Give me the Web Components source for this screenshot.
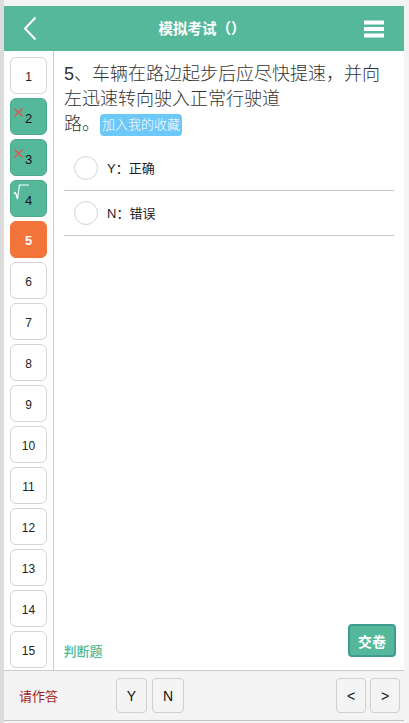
<!DOCTYPE html>
<html lang="zh">
<head>
<meta charset="utf-8">
<title>模拟考试</title>
<style>
  html, body { margin: 0; height: 100%; }
  body {
    width: 409px;
    height: 723px;
    overflow: hidden;
    background: #f4f4f4;
    font-family: "Liberation Sans", "Noto Sans CJK SC", sans-serif;
  }
</style>
</head>
<body>
<exam-app>
  <exam-header slot="header" title-text="模拟考试（）"></exam-header>
  <exam-sidebar slot="sidebar">
    <number-tile>1</number-tile>
    <number-tile state="wrong">2</number-tile>
    <number-tile state="wrong">3</number-tile>
    <number-tile state="right">4</number-tile>
    <number-tile state="current">5</number-tile>
    <number-tile>6</number-tile>
    <number-tile>7</number-tile>
    <number-tile>8</number-tile>
    <number-tile>9</number-tile>
    <number-tile>10</number-tile>
    <number-tile>11</number-tile>
    <number-tile>12</number-tile>
    <number-tile>13</number-tile>
    <number-tile>14</number-tile>
    <number-tile>15</number-tile>
  </exam-sidebar>
  <question-panel slot="main" kind="判断题">
    <span slot="question">5、车辆在路边起步后应尽快提速，并向<br>左迅速转向驶入正常行驶道<br>路。</span>
    <option-row>Y：正确</option-row>
    <option-row>N：错误</option-row>
  </question-panel>
  <exam-footer slot="footer"></exam-footer>
</exam-app>

<script>
class ExamApp extends HTMLElement {
  constructor() {
    super()
    this.attachShadow({ mode: "open" }).innerHTML = `
      <style>
        :host {
          display: block;
          width: 409px;
          height: 723px;
          box-sizing: border-box;
          padding: 6px 5px 2px 4px;
          background: linear-gradient(90deg, #dcdcdc 4px, #f4f4f4 4px);
        }
        #frame {
          display: grid;
          grid-template-columns: 50px 1fr;
          grid-template-rows: 45px 1fr 51px;
          height: 100%;
          background: #fff;
        }
        ::slotted([slot="header"]), ::slotted([slot="footer"]) { grid-column: 1 / 3; }
      </style>
      <div id="frame">
        <slot name="header"></slot>
        <slot name="sidebar"></slot>
        <slot name="main"></slot>
        <slot name="footer"></slot>
      </div>
    `
  }
}

class ExamHeader extends HTMLElement {
  constructor() {
    super()
    this.attachShadow({ mode: "open" }).innerHTML = `
      <style>
        :host {
          display: flex;
          align-items: center;
          justify-content: space-between;
          background: #56b89b;
          color: #fff;
          padding: 0 20px 0 19px;
        }
        #title {
          font-size: 14.5px;
          font-weight: bold;
          margin-left: 3px;
          position: relative;
          top: -1px;
        }
        svg { display: block; }
      </style>
      <svg width="14" height="26" viewBox="0 0 14 26" fill="none" stroke="#fff" stroke-width="2">
        <path d="M12.5 1.5 L2 12.5 L12.5 23.5"/>
      </svg>
      <span id="title"></span>
      <svg width="20" height="18" viewBox="0 0 20 18" fill="#fff">
        <rect x="0" y="0.5" width="20" height="4"/>
        <rect x="0" y="7" width="20" height="4"/>
        <rect x="0" y="13.500" width="20" height="4"/>
      </svg>
    `
    this.shadowRoot.getElementById("title").textContent = this.getAttribute("title-text")
  }
}

class ExamSidebar extends HTMLElement {
  constructor() {
    super()
    this.attachShadow({ mode: "open" }).innerHTML = `
      <style>
        :host {
          display: flex;
          flex-direction: column;
          gap: 4px;
          box-sizing: border-box;
          height: 619px;
          padding: 6px 6px 0 6px;
          border-right: 1px solid #ccc;
          background: #fff;
          overflow: hidden;
        }
      </style>
      <slot></slot>
    `
  }
}

class NumberTile extends HTMLElement {
  constructor() {
    super()
    this.attachShadow({ mode: "open" }).innerHTML = `
      <style>
        :host {
          display: flex;
          flex: none;
          align-items: center;
          justify-content: center;
          position: relative;
          width: 37px;
          height: 37px;
          box-sizing: border-box;
          border: 1px solid #d4d4d4;
          border-radius: 6px;
          background: #fff;
          color: #222;
          font-size: 12px;
          padding-top: 3px;
        }
        :host([state="wrong"]), :host([state="right"]) {
          background: #56b89b;
          border-color: #4fa88e;
          color: #111;
          font-size: 13px;
          padding-top: 3px;
          padding-left: 0;
        }
        :host([state="current"]) {
          background: #f2743a;
          border-color: #f2743a;
          color: #fff;
          font-weight: bold;
          font-size: 13px;
          padding-top: 1px;
        }
      </style>
      <svg id="wrong" style="position:absolute;left:2px;top:8px;display:none" width="11" height="11" viewBox="0 0 11 11" fill="none" stroke="#e0564f" stroke-width="1.500">
        <path d="M1.500 1.500 L9.500 9.500 M9.500 1.500 L1.500 9.500"/>
      </svg>
      <svg id="right" style="position:absolute;left:2px;top:3px;display:none" width="17" height="17" viewBox="0 0 17 17" fill="none" stroke="#fff" stroke-width="1.200">
        <path d="M0.500 9.500 L2.500 8.500 L4.500 15 L6.500 1 L16 1"/>
      </svg>
      <slot></slot>
    `
    const state = this.getAttribute("state")
    if (state === "wrong") this.shadowRoot.getElementById("wrong").style.display = "block"
    if (state === "right") this.shadowRoot.getElementById("right").style.display = "block"
  }
}

class QuestionPanel extends HTMLElement {
  constructor() {
    super()
    this.attachShadow({ mode: "open" }).innerHTML = `
      <style>
        :host {
          display: flex;
          flex-direction: column;
          position: relative;
          box-sizing: border-box;
          height: 619px;
          padding: 11px 10px 0 10px;
          background: #fff;
          color: #333;
        }
        #question {
          font-size: 18px;
          line-height: 25px;
          font-weight: 300;
          margin-bottom: 9px;
        }
        #fav {
          display: inline-block;
          background: #6cc8f7;
          color: #fff;
          font-size: 13px;
          line-height: 21px;
          height: 22px;
          padding: 0 2px;
          border-radius: 4px;
          vertical-align: 1px;
        }
        #kind {
          position: absolute;
          left: 9.500px;
          bottom: 10px;
          color: #4dbb9a;
          font-size: 13px;
          font-weight: 500;
        }
        #submit {
          position: absolute;
          right: 8px;
          bottom: 13px;
          width: 48px;
          height: 33px;
          box-sizing: border-box;
          border: 2px solid #3e9c90;
          border-radius: 4px;
          background: #56b89b;
          color: #fff;
          font: bold 14px "Liberation Sans", "Noto Sans CJK SC", sans-serif;
          padding: 0;
        }
      </style>
      <div id="question"><slot name="question"></slot><span id="fav">加入我的收藏</span></div>
      <slot></slot>
      <span id="kind"></span>
      <button id="submit">交卷</button>
    `
    this.shadowRoot.getElementById("kind").textContent = this.getAttribute("kind")
  }
}

class OptionRow extends HTMLElement {
  constructor() {
    super()
    this.attachShadow({ mode: "open" }).innerHTML = `
      <style>
        :host {
          display: flex;
          align-items: center;
          gap: 9px;
          height: 45px;
          box-sizing: border-box;
          padding-left: 10px;
          border-bottom: 1px solid #c8c8c8;
          font-size: 13px;
          color: #222;
        }
        #radio {
          width: 24px;
          height: 24px;
          box-sizing: border-box;
          border: 1px solid #d4d4d4;
          border-radius: 50%;
          background: #fff;
        }
        #label { padding-bottom: 2px; }
      </style>
      <span id="radio"></span><span id="label"><slot></slot></span>
    `
  }
}

class ExamFooter extends HTMLElement {
  constructor() {
    super()
    this.attachShadow({ mode: "open" }).innerHTML = `
      <style>
        :host {
          display: flex;
          align-items: center;
          box-sizing: border-box;
          padding: 0 4px 0 15px;
          background: #f4f4f4;
          border-top: 1px solid #ccc;
          border-bottom: 1px solid #c4c4c4;
        }
        #status { color: #9e1c1c; font-size: 13px; width: 97px; }
        #answers, #nav { display: flex; gap: 5px; }
        #nav { margin-left: auto; gap: 4px; }
        button {
          height: 35px;
          box-sizing: border-box;
          border: 1px solid #d0d0d0;
          border-radius: 4px;
          background: #f4f4f4;
          color: #111;
          font: 14px "Liberation Sans", sans-serif;
          padding: 0;
        }
        #answers button { width: 31px; }
        #answers button + button { width: 32px; }
        #nav button { width: 30px; }
      </style>
      <span id="status">请作答</span>
      <div id="answers"><button>Y</button><button>N</button></div>
      <div id="nav"><button>&lt;</button><button>&gt;</button></div>
    `
  }
}

customElements.define("exam-app", ExamApp)
customElements.define("exam-header", ExamHeader)
customElements.define("exam-sidebar", ExamSidebar)
customElements.define("number-tile", NumberTile)
customElements.define("question-panel", QuestionPanel)
customElements.define("option-row", OptionRow)
customElements.define("exam-footer", ExamFooter)
</script>
</body>
</html>
